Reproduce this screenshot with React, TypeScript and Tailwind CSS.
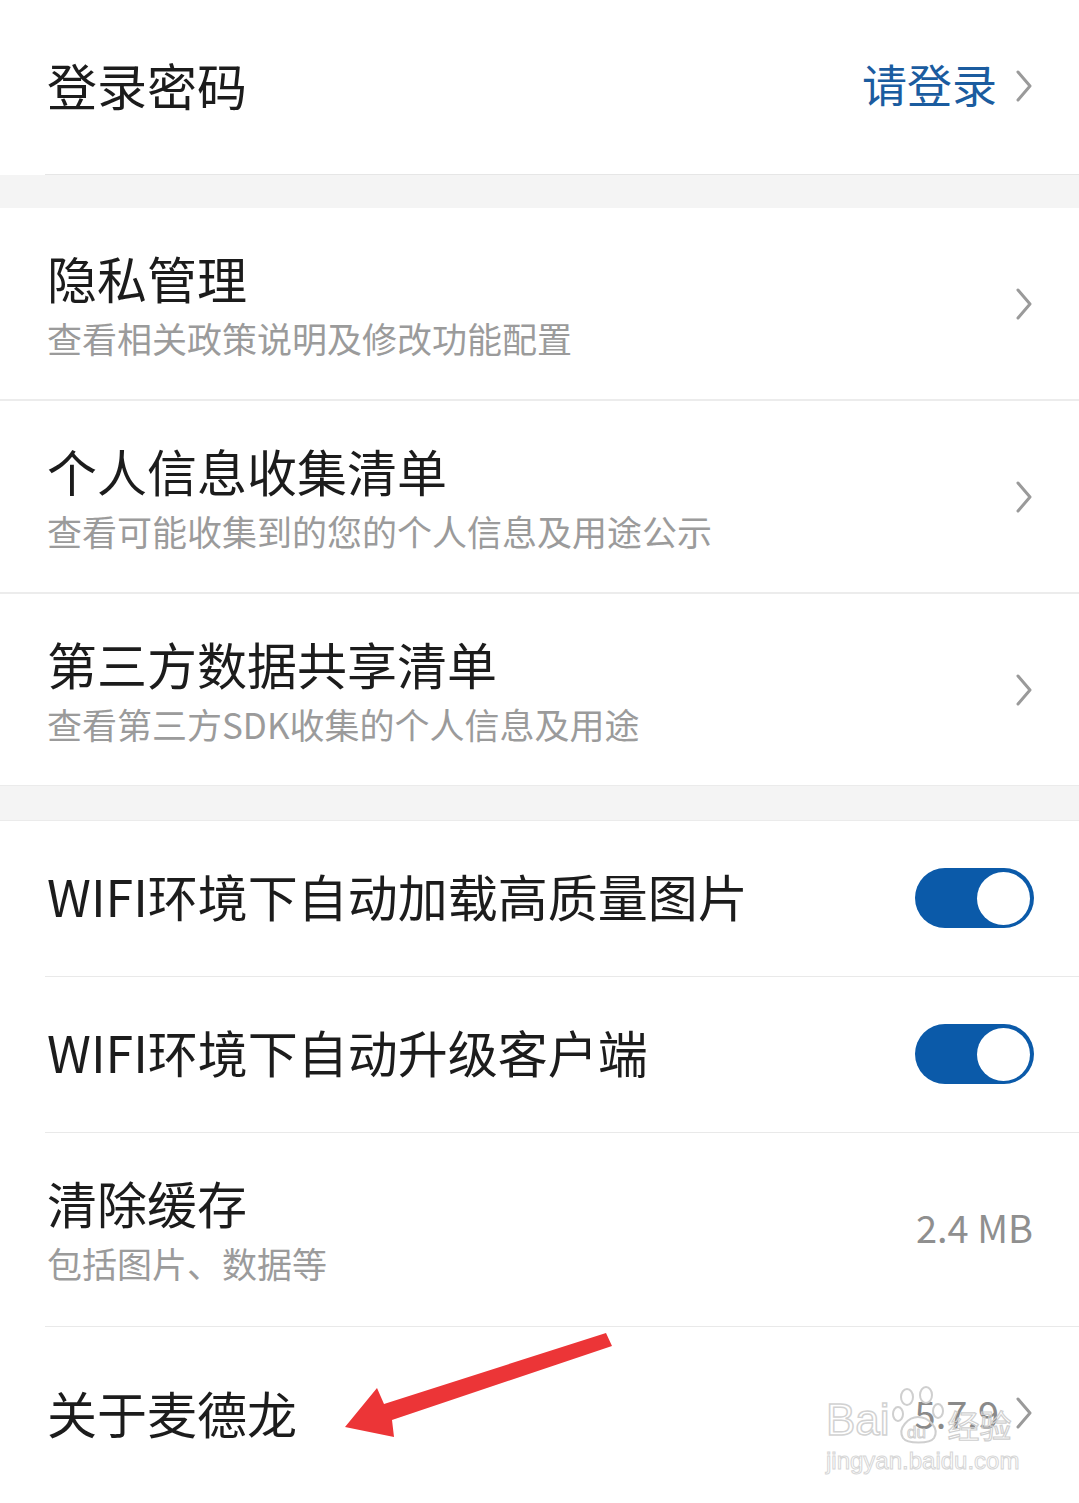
import React from 'react';

const FONT = "font-['Noto_Sans_CJK_SC','Noto_Sans',sans-serif]";

const Chevron = () => (
  <svg width="18" height="32" viewBox="0 0 18 32" className="shrink-0">
    <polyline points="3,2 15,16 3,30" fill="none" stroke="#9a9a9a" strokeWidth="3" strokeLinecap="round" strokeLinejoin="round" />
  </svg>
);

const Toggle = () => (
  <div className="w-[119px] h-[60px] rounded-full bg-[#0b5aa9] flex items-center justify-end pr-[4px]">
    <div className="w-[53px] h-[53px] rounded-full bg-white" />
  </div>
);

const LinkRow = ({ title, sub, last }: { title: string; sub: string; last?: boolean }) => (
  <div className={`flex items-start justify-between pl-[47px] pr-[46px] ${last ? 'h-[191px]' : 'h-[193px] border-b-2 border-[#ececec]'}`}>
    <div className="pt-[39px] flex flex-col gap-[9px]">
      <div className="text-[50px] leading-[60px] text-[#1c1c1c]">{title}</div>
      <div className="text-[35px] leading-[44px] text-[#9b9b9b]">{sub}</div>
    </div>
    <div className="self-center">
      <Chevron />
    </div>
  </div>
);

const SwitchRow = ({ title }: { title: string }) => (
  <div className="h-[156px] flex items-center justify-between pl-[47px] pr-[45px] relative">
    <div className="text-[50px] leading-[60px] text-[#1c1c1c] pb-[8px]">{title}</div>
    <div className="pb-[2px]">
      <Toggle />
    </div>
    <div className="absolute left-[45px] right-0 bottom-0 h-[1.5px] bg-[#e9e9e9]" />
  </div>
);

export default function App() {
  return (
    <div className={`w-[1079px] h-[1503px] bg-white overflow-hidden relative ${FONT}`}>
      {/* login password */}
      <div className="h-[175px] flex items-center justify-between pl-[47px] pr-[46px] relative">
        <div className="text-[50px] leading-[60px] text-[#1c1c1c] pb-[8px]">登录密码</div>
        <div className="flex items-center gap-[18px] pb-[4px]">
          <span className="text-[45px] leading-[56px] text-[#1b5c9f] pb-[4px]">请登录</span>
          <Chevron />
        </div>
        <div className="absolute left-[45px] right-0 bottom-0 h-[1.5px] bg-[#e6e6e6]" />
      </div>
      <div className="h-[33px] bg-[#f4f4f4]" />

      {/* privacy */}
      <LinkRow title="隐私管理" sub="查看相关政策说明及修改功能配置" />
      <LinkRow title="个人信息收集清单" sub="查看可能收集到的您的个人信息及用途公示" />
      <LinkRow title="第三方数据共享清单" sub="查看第三方SDK收集的个人信息及用途" last />
      <div className="h-[36px] bg-[#f4f4f4] border-y border-[#ebebeb]" />

      {/* settings */}
      <SwitchRow title="WIFI环境下自动加载高质量图片" />
      <SwitchRow title="WIFI环境下自动升级客户端" />

      <div className="h-[194px] flex items-start justify-between pl-[47px] pr-[46px] relative">
        <div className="pt-[39px] flex flex-col gap-[9px]">
          <div className="text-[50px] leading-[60px] text-[#1c1c1c]">清除缓存</div>
          <div className="text-[35px] leading-[44px] text-[#9b9b9b]">包括图片、数据等</div>
        </div>
        <div className="self-center pb-[6px] text-[38px] leading-[44px] text-[#8f8f8f]">2.4 MB</div>
        <div className="absolute left-[45px] right-0 bottom-0 h-[1.5px] bg-[#e9e9e9]" />
      </div>

      <div className="h-[180px] flex items-center justify-between pl-[47px] pr-[46px]">
        <div className="text-[50px] leading-[60px] text-[#1c1c1c] pb-[10px]">关于麦德龙</div>
        <div className="flex items-center gap-[16px] pb-[8px]">
          <span className="text-[38px] leading-[44px] text-[#8a8a8a]">5.7.9</span>
          <Chevron />
        </div>
      </div>

      {/* red annotation arrow */}
      <svg className="absolute left-0 top-0 pointer-events-none" width="1079" height="1503" viewBox="0 0 1079 1503">
        <polygon
          points="606,1333 612,1346 392,1420 394,1437 345,1427 377,1388 384,1404"
          fill="#ec3537"
        />
      </svg>

      {/* watermark */}
      <div className="absolute left-[826px] top-[1386px] flex flex-col items-start pointer-events-none">
        <div className="flex items-end gap-[2px]">
          <span className="text-[44px] leading-[52px] font-['Liberation_Sans',sans-serif] text-transparent [-webkit-text-stroke:1.5px_#d2d2d2]">Bai</span>
          <svg width="54" height="60" viewBox="0 0 54 60">
            <g fill="none" stroke="#cfcfcf" strokeWidth="2">
              <ellipse cx="15" cy="11" rx="6" ry="8" />
              <ellipse cx="34" cy="9" rx="6" ry="8" />
              <ellipse cx="6" cy="28" rx="5" ry="7" />
              <ellipse cx="46" cy="25" rx="5" ry="7" />
              <path d="M11 52 C5 42 17 31 26 31 C36 31 48 42 42 52 C38 58 15 58 11 52 Z" />
            </g>
            <text x="15" y="52" fontSize="17" fill="none" stroke="#cfcfcf" strokeWidth="1" fontFamily="Liberation Sans">du</text>
          </svg>
          <span className="text-[32px] leading-[44px] text-transparent [-webkit-text-stroke:1.2px_#cfcfcf]">经验</span>
        </div>
        <span className="text-[24px] leading-[30px] font-['Liberation_Sans',sans-serif] text-transparent [-webkit-text-stroke:1px_#d6d6d6]">jingyan.baidu.com</span>
      </div>
    </div>
  );
}
